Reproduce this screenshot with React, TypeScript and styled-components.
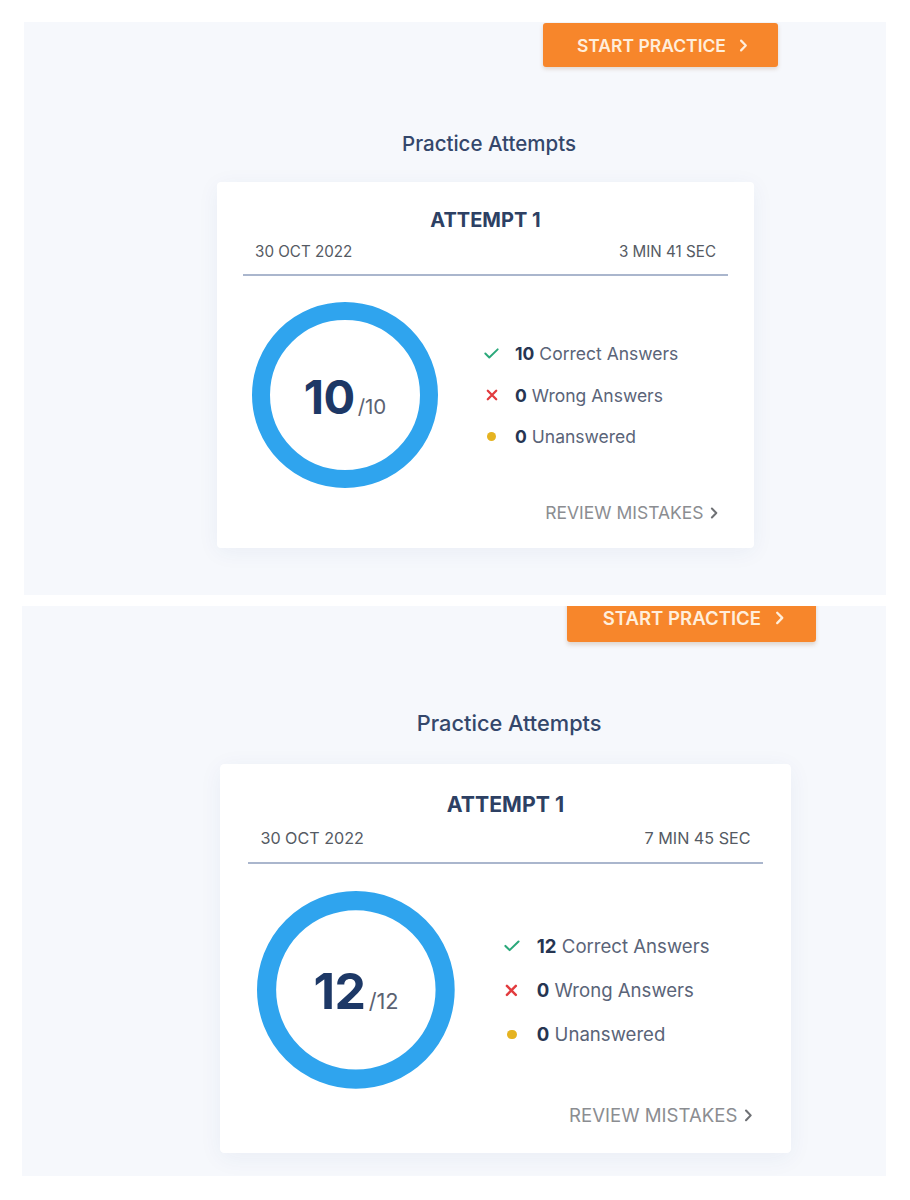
import styled, { createGlobalStyle } from 'styled-components'

const GlobalStyle = createGlobalStyle`
  body {
    margin: 0;
    background: #ffffff;
    font-family: Inter, "Noto Sans", "Liberation Sans", sans-serif;
  }
`

const Page = styled.div`
  display: flex;
  flex-direction: column;
  gap: 11px;
  padding-top: 22px;
`

const Panel = styled.section<{ $left: number; $width: number; $top: number; $bottom: number }>`
  margin-left: ${(p) => p.$left}px;
  width: ${(p) => p.$width}px;
  padding-top: ${(p) => p.$top}px;
  padding-bottom: ${(p) => p.$bottom}px;
  background: #f6f8fc;
  overflow: hidden;
`

const Column = styled.div<{ $scale: number; $left: number; $shift: number }>`
  zoom: ${(p) => p.$scale};
  margin-left: ${(p) => p.$left}px;
  margin-top: ${(p) => p.$shift}px;
  width: 561px;
  display: flex;
  flex-direction: column;
`

const StartButton = styled.button`
  align-self: flex-end;
  width: 235px;
  height: 44px;
  border: none;
  border-radius: 3px;
  background: #f7862b;
  box-shadow: 0 2px 4px rgba(120, 60, 0, 0.18);
  color: #ffeedb;
  font-family: Inter, "Liberation Sans", sans-serif;
  font-size: 17.5px;
  font-weight: 600;
  display: flex;
  align-items: center;
  justify-content: center;
  gap: 13px;
  padding: 0 0 0 4px;
`

const Title = styled.h2`
  width: 537px;
  margin: 66px 0 0;
  padding-left: 7px;
  box-sizing: border-box;
  text-align: center;
  font-size: 20.5px;
  line-height: 22px;
  font-weight: 500;
  color: #34476b;
`

const Card = styled.div`
  width: 537px;
  height: 366px;
  margin-top: 27px;
  box-sizing: border-box;
  padding: 26px 26px 25px;
  background: #ffffff;
  border-radius: 4px;
  box-shadow: 0 4px 22px rgba(40, 70, 130, 0.06);
  display: flex;
  flex-direction: column;
`

const AttemptName = styled.div`
  text-align: center;
  font-size: 20px;
  line-height: 24px;
  font-weight: 700;
  color: #2d4063;
`

const MetaRow = styled.div`
  margin-top: 10px;
  padding: 0 12px;
  display: flex;
  justify-content: space-between;
  font-size: 15.2px;
  line-height: 20px;
  color: #555a63;
`

const Divider = styled.hr`
  margin: 12px 0 0;
  border: none;
  height: 2px;
  background: #aab6cd;
`

const Body = styled.div`
  margin-top: 26px;
  padding-left: 9px;
  display: flex;
  align-items: center;
  gap: 46px;
`

const Donut = styled.div`
  position: relative;
  width: 186px;
  height: 186px;
  flex: none;
  display: flex;
  align-items: center;
  justify-content: center;
`

const Ring = styled.svg`
  position: absolute;
  inset: 0;
`

const Score = styled.div`
  position: relative;
  display: flex;
  align-items: baseline;
  gap: 3px;
  margin-top: 2px;
`

const ScoreValue = styled.span`
  font-size: 47px;
  font-weight: 700;
  color: #1d3866;
  letter-spacing: -0.5px;
`

const ScoreTotal = styled.span`
  font-size: 20.5px;
  color: #5b6272;
`

const Stats = styled.ul`
  margin: 0;
  padding: 0;
  list-style: none;
  display: flex;
  flex-direction: column;
`

const Stat = styled.li`
  height: 41.5px;
  display: flex;
  align-items: center;
  gap: 16px;
  font-size: 17.5px;
  color: #5a6478;
`

const StatIcon = styled.span`
  width: 15px;
  display: flex;
  align-items: center;
  justify-content: center;
`

const Dot = styled.span<{ $color: string }>`
  width: 9px;
  height: 9px;
  border-radius: 50%;
  background: ${(p) => p.$color};
`

const Count = styled.b`
  color: #263552;
  font-weight: 700;
  margin-right: 5px;
`

const Footer = styled.div`
  margin-top: 15px;
  padding-right: 10px;
  display: flex;
  justify-content: flex-end;
`

const ReviewLink = styled.a`
  display: flex;
  align-items: center;
  gap: 6px;
  font-size: 17.5px;
  line-height: 20px;
  color: #8b8d91;
  text-decoration: none;
`

const Chevron = ({ color, size = 12 }: { color: string; size?: number }) => (
  <svg width={size * 0.7} height={size} viewBox="0 0 7 12">
    <polyline points="1.2,1.5 5.6,6 1.2,10.5" fill="none" stroke={color} strokeWidth="2" strokeLinecap="round" strokeLinejoin="round" />
  </svg>
)

const CheckIcon = () => (
  <svg width="17" height="13" viewBox="0 0 17 13">
    <polyline points="1.5,6.5 6,11 15.5,1.8" fill="none" stroke="#2aa87a" strokeWidth="2.2" strokeLinecap="round" strokeLinejoin="round" />
  </svg>
)

const CrossIcon = () => (
  <svg width="12" height="12" viewBox="0 0 12 12">
    <path d="M1.8 1.8 L10.2 10.2 M10.2 1.8 L1.8 10.2" stroke="#e23b3e" strokeWidth="2.3" strokeLinecap="round" />
  </svg>
)

type Attempt = {
  date: string
  duration: string
  correct: number
  wrong: number
  unanswered: number
  total: number
}

const AttemptsPanel = ({
  attempt,
  scale,
  left,
  shift,
}: {
  attempt: Attempt
  scale: number
  left: number
  shift: number
}) => (
  <Column $scale={scale} $left={left} $shift={shift}>
    <StartButton>
      START PRACTICE
      <Chevron color="#ffeedb" size={13} />
    </StartButton>
    <Title>Practice Attempts</Title>
    <Card>
      <AttemptName>ATTEMPT 1</AttemptName>
      <MetaRow>
        <span>{attempt.date}</span>
        <span>{attempt.duration}</span>
      </MetaRow>
      <Divider />
      <Body>
        <Donut>
          <Ring width="186" height="186" viewBox="0 0 186 186">
            <circle cx="93" cy="93" r="84" fill="none" stroke="#2fa4ee" strokeWidth="18" />
          </Ring>
          <Score>
            <ScoreValue>{attempt.correct}</ScoreValue>
            <ScoreTotal>/{attempt.total}</ScoreTotal>
          </Score>
        </Donut>
        <Stats>
          <Stat>
            <StatIcon>
              <CheckIcon />
            </StatIcon>
            <span>
              <Count>{attempt.correct}</Count>Correct Answers
            </span>
          </Stat>
          <Stat>
            <StatIcon>
              <CrossIcon />
            </StatIcon>
            <span>
              <Count>{attempt.wrong}</Count>Wrong Answers
            </span>
          </Stat>
          <Stat>
            <StatIcon>
              <Dot $color="#e5b321" />
            </StatIcon>
            <span>
              <Count>{attempt.unanswered}</Count>Unanswered
            </span>
          </Stat>
        </Stats>
      </Body>
      <Footer>
        <ReviewLink href="#">
          REVIEW MISTAKES
          <Chevron color="#6f7175" />
        </ReviewLink>
      </Footer>
    </Card>
  </Column>
)

const first: Attempt = { date: '30 OCT 2022', duration: '3 MIN 41 SEC', correct: 10, wrong: 0, unanswered: 0, total: 10 }
const second: Attempt = { date: '30 OCT 2022', duration: '7 MIN 45 SEC', correct: 12, wrong: 0, unanswered: 0, total: 12 }

const App = () => (
  <>
    <GlobalStyle />
    <Page>
      <Panel $left={24} $width={862} $top={1} $bottom={47}>
        <AttemptsPanel attempt={first} scale={1} left={193} shift={0} />
      </Panel>
      <Panel $left={22} $width={864} $top={0} $bottom={23}>
        <AttemptsPanel attempt={second} scale={1.063} left={186.3} shift={-10.4} />
      </Panel>
    </Page>
  </>
)

export default App
